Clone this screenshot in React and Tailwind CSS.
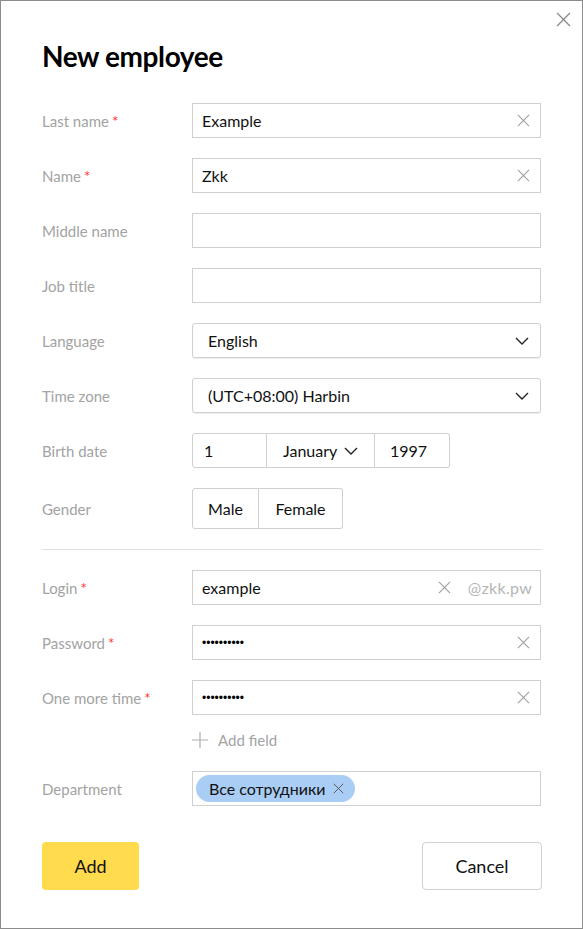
import React from 'react';

const font = { fontFamily: 'Lato, "Noto Sans", sans-serif' };

const Cross = ({ className = '' }) => (
    <svg viewBox="0 0 14 14" className={className} fill="none" stroke="currentColor" strokeWidth="1.2">
        <path d="M1 1l12 12M13 1L1 13" />
    </svg>
);

const Chevron = () => (
    <svg viewBox="0 0 14 8" className="w-[14px] h-[8px] text-[#222]" fill="none" stroke="currentColor" strokeWidth="1.4">
        <path d="M1 1l6 6 6-6" />
    </svg>
);

const Label = ({ children, required }) => (
    <div className="w-[150px] shrink-0 text-[15px] text-[#a3a3a3] pt-[2px]">
        {children}
        {required && <span className="text-[#f33] ml-[3px]">*</span>}
    </div>
);

const Row = ({ label, required, children, className = 'h-[35px]' }) => (
    <div className={`flex items-center ${className}`}>
        <Label required={required}>{label}</Label>
        {children}
    </div>
);

const TextInput = ({ value, clear }) => (
    <div className="w-[350px] h-[35px] border border-[#d0d0d0] flex items-center pl-[9px] pr-[10px] text-[16px] text-[#111]">
        <span className="flex-1">{value}</span>
        {clear && <Cross className="w-[13px] h-[13px] text-[#a0a0a0]" />}
    </div>
);

const Dots = () => (
    <span className="flex-1 text-[12px] leading-none text-black" style={{ fontFamily: '"Liberation Sans", sans-serif' }}>
        ••••••••••
    </span>
);

const Select = ({ value }) => (
    <div className="w-[350px] h-[35px] border border-[#d0d0d0] rounded-[3px] shadow-[0_1px_1px_rgba(0,0,0,0.08)] flex items-center pl-[15px] pr-[11px] text-[16px] text-[#111]">
        <span className="flex-1">{value}</span>
        <Chevron />
    </div>
);

export default function App() {
    return (
        <div style={font} className="w-[583px] h-[929px] border border-[#8c8c8c] bg-white relative">
            <button className="absolute top-[11px] right-[11px] text-[#8a8a8a]">
                <Cross className="w-[15px] h-[15px]" />
            </button>
            <div className="pl-[41px] pr-[41px]">
                <h1 className="pt-[37px] text-[28px] leading-[36px] font-bold text-black tracking-[-0.4px]">New employee</h1>
                <div className="mt-[29px] flex flex-col gap-[20px]">
                    <Row label="Last name" required><TextInput value="Example" clear /></Row>
                    <Row label="Name" required><TextInput value="Zkk" clear /></Row>
                    <Row label="Middle name"><TextInput value="" /></Row>
                    <Row label="Job title"><TextInput value="" /></Row>
                    <Row label="Language"><Select value="English" /></Row>
                    <Row label="Time zone"><Select value="(UTC+08:00) Harbin" /></Row>
                    <Row label="Birth date">
                        <div className="flex h-[35px] text-[16px] text-[#111]">
                            <div className="w-[75px] border border-[#d0d0d0] rounded-l-[3px] flex items-center pl-[11px]">1</div>
                            <div className="w-[108px] border-y border-r border-[#d0d0d0] flex items-center pl-[16px] gap-[7px]">
                                January <Chevron />
                            </div>
                            <div className="w-[75px] border-y border-r border-[#d0d0d0] rounded-r-[3px] flex items-center pl-[15px]">1997</div>
                        </div>
                    </Row>
                    <Row label="Gender" className="h-[41px]">
                        <div className="flex h-[41px] text-[16px] text-[#111]">
                            <div className="w-[67px] border border-[#d0d0d0] rounded-l-[3px] flex items-center justify-center">Male</div>
                            <div className="w-[84px] border-y border-r border-[#d0d0d0] rounded-r-[3px] flex items-center justify-center">Female</div>
                        </div>
                    </Row>
                </div>
                <div className="mt-[20px] border-t border-[#e0e0e0] w-[500px]" />
                <div className="mt-[20px] flex flex-col gap-[20px]">
                    <Row label="Login" required>
                        <div className="w-[350px] h-[35px] border border-[#d0d0d0] flex items-center pl-[9px] pr-[8px] text-[16px] text-[#111]">
                            <span className="flex-1">example</span>
                            <Cross className="w-[13px] h-[13px] text-[#a0a0a0]" />
                            <span className="ml-[17px] text-[#b5b5b5] tracking-[0.3px]">@zkk.pw</span>
                        </div>
                    </Row>
                    <Row label="Password" required>
                        <div className="w-[350px] h-[35px] border border-[#d0d0d0] flex items-center pl-[9px] pr-[10px]">
                            <Dots />
                            <Cross className="w-[13px] h-[13px] text-[#a0a0a0]" />
                        </div>
                    </Row>
                    <Row label="One more time" required>
                        <div className="w-[350px] h-[35px] border border-[#d0d0d0] flex items-center pl-[9px] pr-[10px]">
                            <Dots />
                            <Cross className="w-[13px] h-[13px] text-[#a0a0a0]" />
                        </div>
                    </Row>
                </div>
                <div className="ml-[150px] mt-[14px] h-[22px] flex items-center gap-[10px] text-[15px] text-[#a3a3a3]">
                    <svg viewBox="0 0 16 16" className="w-[16px] h-[16px]" fill="none" stroke="#b0b0b0" strokeWidth="1.2">
                        <path d="M8 0v16M0 8h16" />
                    </svg>
                    Add field
                </div>
                <div className="mt-[20px]">
                    <Row label="Department">
                        <div className="w-[350px] h-[35px] border border-[#d0d0d0] flex items-center pl-[3px]">
                            <div className="h-[27px] rounded-full bg-[#a9cdf4] flex items-center pl-[13px] pr-[11px] gap-[8px] text-[16px] text-[#111]">
                                Все сотрудники
                                <Cross className="w-[11px] h-[11px] text-[#555]" />
                            </div>
                        </div>
                    </Row>
                </div>
                <div className="mt-[36px] flex justify-between w-[500px]">
                    <button className="w-[97px] h-[48px] rounded-[4px] bg-[#ffdb4d] text-[18px] text-[#111]">Add</button>
                    <button className="w-[120px] h-[48px] rounded-[4px] border border-[#d0d0d0] bg-white text-[18px] text-[#111]">Cancel</button>
                </div>
            </div>
        </div>
    );
}
